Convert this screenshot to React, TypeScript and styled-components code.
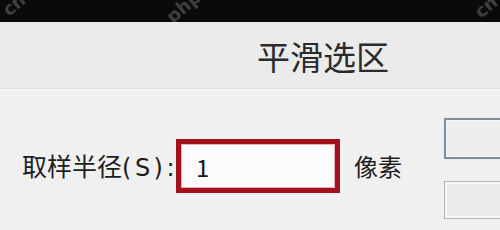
import React from "react";
import styled, { createGlobalStyle } from "styled-components";

const Global = createGlobalStyle`
  html, body { margin: 0; padding: 0; }
  body {
    width: 500px;
    height: 230px;
    overflow: hidden;
    background: #f0f0f0;
    font-family: "Noto Sans CJK SC", "Noto Sans", sans-serif;
  }
`;

const Page = styled.div`
  position: relative;
  width: 500px;
  height: 230px;
  display: flex;
  flex-direction: column;
  overflow: hidden;
  background: #f0f0f0;
`;

const TopBar = styled.div`
  height: 22px;
  background: #0a0a0a;
  flex-shrink: 0;
`;

const TitleBar = styled.div`
  height: 66px;
  background: #ebebeb;
  display: flex;
  align-items: center;
  padding-left: 257px;
  flex-shrink: 0;
`;

const Title = styled.div`
  font-size: 33px;
  line-height: 1;
  color: #2b2b2b;
  margin-top: 2px;
  white-space: nowrap;
`;

const Divider = styled.div`
  height: 2px;
  border-top: 1px solid #e2e2e2;
  background: #f6f6f6;
  flex-shrink: 0;
`;

const Content = styled.div`
  flex: 1;
  display: flex;
  align-items: flex-start;
  padding-left: 22px;
  overflow: hidden;
`;

const FormRow = styled.div`
  display: flex;
  align-items: center;
  margin-top: 48px;
  height: 54px;
  flex-shrink: 0;
`;

const Label = styled.span`
  font-size: 25px;
  color: #1e1e1e;
  line-height: 1;
  white-space: nowrap;
  flex-shrink: 0;
`;

const Latin = styled.span`
  font-family: "DejaVu Sans", sans-serif;
  font-size: 24px;
  letter-spacing: 3.5px;
`;

const Input = styled.div`
  box-sizing: border-box;
  width: 164px;
  height: 54px;
  flex-shrink: 0;
  border: 5px solid #a3111d;
  background: #fbfbfb;
  box-shadow: inset 0 0 0 1px #eab3b3;
  display: flex;
  align-items: center;
  padding-left: 15px;
  font-size: 24px;
  color: #151515;
  margin-left: -2px;
`;

const Unit = styled.span`
  font-size: 24px;
  color: #1e1e1e;
  margin-left: 14px;
  line-height: 1;
  white-space: nowrap;
  flex-shrink: 0;
`;

const Buttons = styled.div`
  display: flex;
  flex-direction: column;
  gap: 22px;
  margin-left: 42px;
  margin-top: 27px;
  flex-shrink: 0;
`;

const Button = styled.div<{ $primary?: boolean }>`
  box-sizing: border-box;
  width: 90px;
  height: ${(p) => (p.$primary ? 41 : 38)}px;
  background: ${(p) => (p.$primary ? "#eceeec" : "#ebebeb")};
  border: ${(p) => (p.$primary ? "2px solid #7d8e9c" : "1px solid #b4b4b4")};
  box-shadow: ${(p) =>
    p.$primary
      ? "inset 0 0 0 1px #f4f8fa, 0 0 2px #cfe3f2"
      : "inset 0 0 0 2px #f7f7f7"};
`;

const Watermark = styled.span<{ $x: number; $y: number }>`
  position: absolute;
  left: ${(p) => p.$x}px;
  top: ${(p) => p.$y}px;
  transform: rotate(-40deg);
  font-family: "DejaVu Sans", sans-serif;
  font-size: 18px;
  font-weight: bold;
  color: rgba(255, 255, 255, 0.22);
  pointer-events: none;
`;

export default function App() {
  return (
    <>
      <Global />
      <Page>
        <TopBar />
        <TitleBar>
          <Title>平滑选区</Title>
        </TitleBar>
        <Divider />
        <Content>
          <FormRow>
            <Label>
              取样半径<Latin>(S):</Latin>
            </Label>
            <Input>1</Input>
            <Unit>像素</Unit>
          </FormRow>
          <Buttons>
            <Button $primary />
            <Button />
          </Buttons>
        </Content>
        <Watermark $x={2} $y={-6}>cn</Watermark>
        <Watermark $x={164} $y={-4}>php</Watermark>
        <Watermark $x={474} $y={-4}>cn</Watermark>
      </Page>
    </>
  );
}
